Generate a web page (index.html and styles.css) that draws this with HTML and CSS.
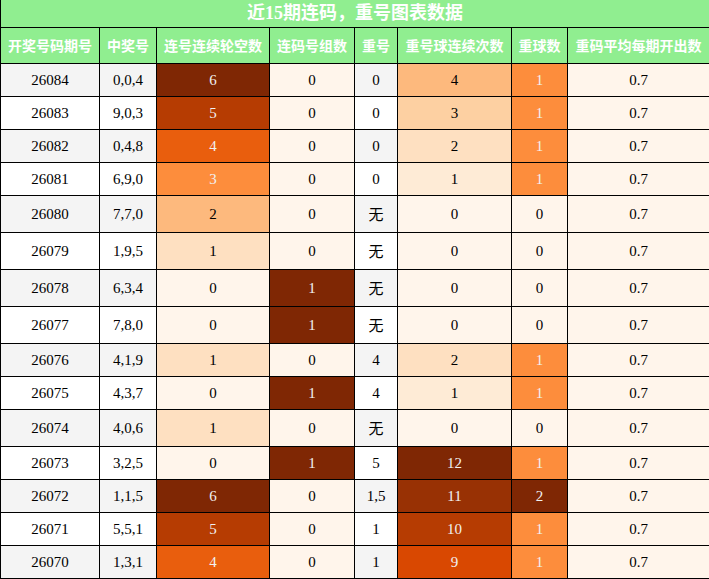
FILE: index.html
```html
<!DOCTYPE html>
<html lang="zh">
<head>
<meta charset="utf-8">
<title>近15期连码，重号图表数据</title>
<link rel="stylesheet" href="styles.css">
</head>
<body>
<table class="grid">
  <colgroup>
    <col class="c1"><col class="c2"><col class="c3"><col class="c4"><col class="c5"><col class="c6"><col class="c7"><col class="c8">
  </colgroup>
  <thead>
    <tr><th class="title" colspan="8">近15期连码，重号图表数据</th></tr>
    <tr class="head">
      <th>开奖号码期号</th><th>中奖号</th><th>连号连续轮空数</th><th>连码号组数</th><th>重号</th><th>重号球连续次数</th><th>重球数</th><th>重码平均每期开出数</th>
    </tr>
  </thead>
  <tbody>
    <tr class="odd"><td>26084</td><td>0,0,4</td><td class="o6 lt">6</td><td class="o0">0</td><td>0</td><td class="k4">4</td><td class="o3 lt">1</td><td class="o0">0.7</td></tr>
    <tr><td>26083</td><td>9,0,3</td><td class="o5 lt">5</td><td class="o0">0</td><td>0</td><td class="k3">3</td><td class="o3 lt">1</td><td class="o0">0.7</td></tr>
    <tr class="odd"><td>26082</td><td>0,4,8</td><td class="o4 lt">4</td><td class="o0">0</td><td>0</td><td class="k2">2</td><td class="o3 lt">1</td><td class="o0">0.7</td></tr>
    <tr><td>26081</td><td>6,9,0</td><td class="o3 lt">3</td><td class="o0">0</td><td>0</td><td class="k1">1</td><td class="o3 lt">1</td><td class="o0">0.7</td></tr>
    <tr class="odd"><td>26080</td><td>7,7,0</td><td class="o2">2</td><td class="o0">0</td><td class="none">无</td><td class="o0">0</td><td class="o0">0</td><td class="o0">0.7</td></tr>
    <tr><td>26079</td><td>1,9,5</td><td class="o1">1</td><td class="o0">0</td><td class="none">无</td><td class="o0">0</td><td class="o0">0</td><td class="o0">0.7</td></tr>
    <tr class="odd"><td>26078</td><td>6,3,4</td><td class="o0">0</td><td class="o6 lt">1</td><td class="none">无</td><td class="o0">0</td><td class="o0">0</td><td class="o0">0.7</td></tr>
    <tr><td>26077</td><td>7,8,0</td><td class="o0">0</td><td class="o6 lt">1</td><td class="none">无</td><td class="o0">0</td><td class="o0">0</td><td class="o0">0.7</td></tr>
    <tr class="odd"><td>26076</td><td>4,1,9</td><td class="o1">1</td><td class="o0">0</td><td>4</td><td class="k2">2</td><td class="o3 lt">1</td><td class="o0">0.7</td></tr>
    <tr><td>26075</td><td>4,3,7</td><td class="o0">0</td><td class="o6 lt">1</td><td>4</td><td class="k1">1</td><td class="o3 lt">1</td><td class="o0">0.7</td></tr>
    <tr class="odd"><td>26074</td><td>4,0,6</td><td class="o1">1</td><td class="o0">0</td><td class="none">无</td><td class="o0">0</td><td class="o0">0</td><td class="o0">0.7</td></tr>
    <tr><td>26073</td><td>3,2,5</td><td class="o0">0</td><td class="o6 lt">1</td><td>5</td><td class="o6 lt">12</td><td class="o3 lt">1</td><td class="o0">0.7</td></tr>
    <tr class="odd"><td>26072</td><td>1,1,5</td><td class="o6 lt">6</td><td class="o0">0</td><td>1,5</td><td class="k11 lt">11</td><td class="o6 lt">2</td><td class="o0">0.7</td></tr>
    <tr><td>26071</td><td>5,5,1</td><td class="o5 lt">5</td><td class="o0">0</td><td>1</td><td class="o5 lt">10</td><td class="o3 lt">1</td><td class="o0">0.7</td></tr>
    <tr class="odd"><td>26070</td><td>1,3,1</td><td class="o4 lt">4</td><td class="o0">0</td><td>1</td><td class="k9 lt">9</td><td class="o3 lt">1</td><td class="o0">0.7</td></tr>
  </tbody>
</table>
</body>
</html>
```

FILE: styles.css
```css
html, body {
  margin: 0;
  padding: 0;
  background: #ffffff;
}

.grid {
  width: 709px;
  border-collapse: collapse;
  table-layout: fixed;
  font-family: "Liberation Serif", "Noto Sans CJK SC", serif;
  font-size: 15px;
  color: #000000;
}

.c1 { width: 99px; }
.c2 { width: 57px; }
.c3 { width: 113px; }
.c4 { width: 85px; }
.c5 { width: 43px; }
.c6 { width: 114px; }
.c7 { width: 56px; }
.c8 { width: 142px; }

.grid th,
.grid td {
  border: 1px solid #000000;
  text-align: center;
  vertical-align: middle;
  padding: 7px 0;
  white-space: nowrap;
  overflow: hidden;
}

.grid th {
  background: #90ee90;
  color: #ffffff;
  font-weight: bold;
}

.grid .title {
  border-top: 0;
  padding: 0;
  height: 27px;
  line-height: 27px;
  font-size: 18px;
  font-family: "Liberation Serif", "Noto Sans CJK SC", serif;
}

.head th {
  font-family: "Noto Sans CJK SC", sans-serif;
  font-size: 14px;
  line-height: 21px;
}

.grid td {
  line-height: 18px;
  background: #ffffff;
}

.grid tr.odd td {
  background: #f4f4f4;
}

.grid td.none {
  font-family: "Noto Sans CJK SC", sans-serif;
  line-height: 22px;
}

.grid tr td.o0 { background: #fff5eb; }
.grid tr td.o1 { background: #fee0c1; }
.grid tr td.o2 { background: #fdb97d; }
.grid tr td.o3 { background: #fd8d3c; }
.grid tr td.o4 { background: #e95e0d; }
.grid tr td.o5 { background: #b63c02; }
.grid tr td.o6 { background: #7f2704; }

.grid tr td.k1 { background: #feebd6; }
.grid tr td.k2 { background: #fee0c1; }
.grid tr td.k3 { background: #fdd0a2; }
.grid tr td.k4 { background: #fdb97d; }
.grid tr td.k9 { background: #d94801; }
.grid tr td.k11 { background: #983104; }

.grid td.lt { color: #f1f1f1; }
```
